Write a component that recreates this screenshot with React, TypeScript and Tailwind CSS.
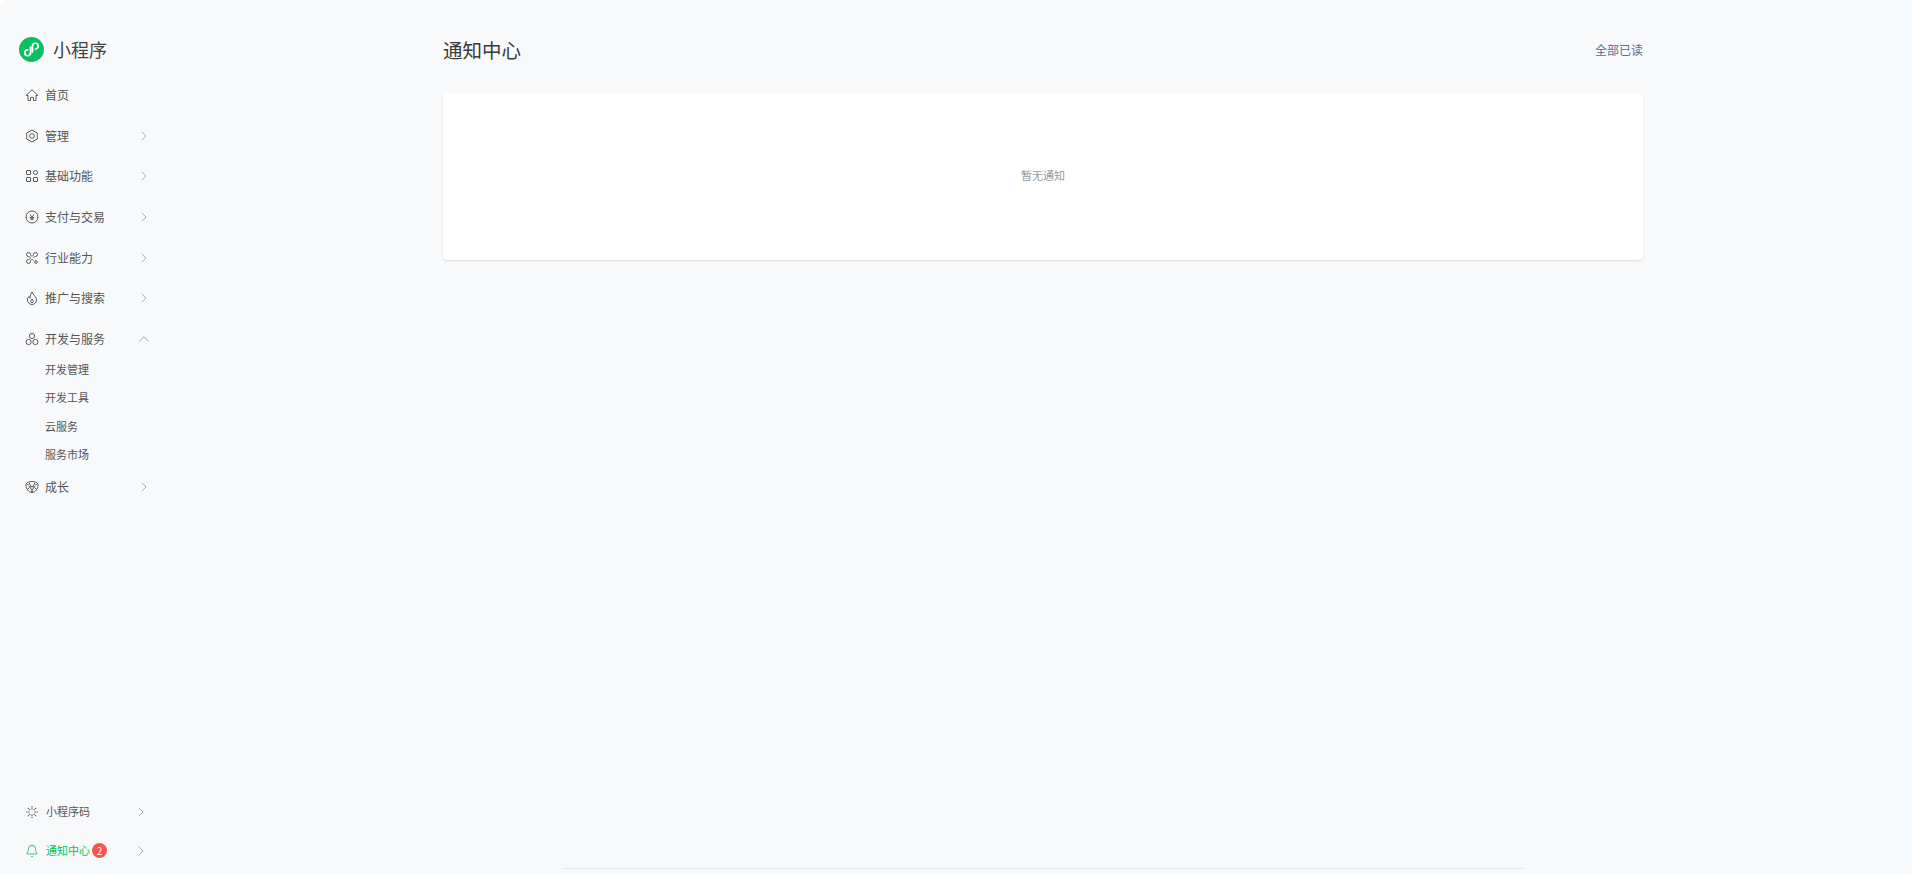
import { ChevronRight, ChevronUp, Bell } from "lucide-react";
import type { ReactNode } from "react";

const font = { fontFamily: '"Noto Sans CJK SC", "Liberation Sans", sans-serif' };

function Icon({ children }: { children: ReactNode }) {
  return (
    <svg viewBox="0 0 14 14" className="w-[14px] h-[14px] shrink-0" fill="none" stroke="#5a5a5a" strokeWidth="1">
      {children}
    </svg>
  );
}

const homeIcon = <path d="M1 7.500 7 1.800l6 5.700h-2v5H8.500V9.500h-3v3H3v-5Z" />;
const settingIcon = (
  <>
    <path d="M7 1 12.300 4v6L7 13 1.700 10V4Z" />
    <circle cx="7" cy="7" r="2.300" />
  </>
);
const appsIcon = (
  <>
    <rect x="1.500" y="1.500" width="4" height="4" rx=".5" />
    <rect x="8.500" y="1.500" width="4" height="4" rx="2" />
    <rect x="1.500" y="8.500" width="4" height="4" rx=".5" />
    <rect x="8.500" y="8.500" width="4" height="4" rx=".5" />
  </>
);
const payIcon = (
  <>
    <circle cx="7" cy="7" r="6" />
    <path d="M5 4.500 7 7l2-2.500M4.800 7.500h4.400M4.800 9h4.400M7 7v3.200" />
  </>
);
const industryIcon = (
  <>
    <path d="M3.500 1.500a2 2 0 0 1 2 2c0 1 .8 1.500 1.500 1.500S8.500 4.500 8.500 3.500a2 2 0 1 1 2 2C9.500 5.500 8.500 6.200 8.500 7" />
    <path d="M3.500 1.500a2 2 0 0 0 0 4c1 0 2 .8 2 1.500 0 .8-1 1.500-2 1.500a2 2 0 1 0 2 2c0-1 .8-2 1.500-2s1.500.5 1.500 1" />
    <circle cx="11" cy="11" r="1.300" />
  </>
);
const fireIcon = <path d="M7 1c.5 2.500 4.500 4.500 4.500 8A4.500 4.500 0 0 1 2.500 9c0-1.500.7-2.700 1.500-3.500.2 1 .7 1.500 1.200 1.700C5 5 5.800 2.800 7 1ZM7 8c-.5.800-1.300 1.300-1.300 2.400a1.300 1.300 0 0 0 2.600 0C8.300 9.300 7.500 8.800 7 8Z" />;
const devIcon = (
  <>
    <circle cx="7" cy="4" r="2.600" />
    <circle cx="3.600" cy="10" r="2.600" />
    <circle cx="10.400" cy="10" r="2.600" />
  </>
);
const growIcon = (
  <>
    <path d="M7 1.500c3 0 6 1 6 3.500 0 4-3 7.500-6 7.500S1 9 1 5c0-2.500 3-3.500 6-3.500Z" />
    <path d="M1.500 4C4 5 6 7 7 12.500 8 7 10 5 12.500 4M4 2.500C5 5 6 6 7 7c1-1 2-2 3-4.500M3 9c1-1.500 2-2.500 4-2.500S10 7.500 11 9" />
  </>
);
const codeIcon = (
  <path d="M7 1v3.500M7 9.500V13M1 7h3.500M9.500 7H13M2.800 2.800 5.200 5.200M8.800 8.800l2.400 2.400M11.200 2.800 8.800 5.200M5.200 8.800l-2.400 2.400" strokeDasharray="1.500 .7" strokeWidth="1.200" />
);

function NavRow({ icon, label, arrow = "right" }: { icon: ReactNode; label: string; arrow?: "right" | "up" | "none" }) {
  return (
    <div className="h-[40.6px] flex items-center pl-[25px] pr-[22px] gap-[6px] text-[12px] text-[#555555]">
      <Icon>{icon}</Icon>
      <span className="flex-1">{label}</span>
      {arrow === "right" && <ChevronRight size={16} strokeWidth={1} className="text-[#888888]" />}
      {arrow === "up" && <ChevronUp size={18} strokeWidth={1} className="text-[#888888] -mr-px" />}
    </div>
  );
}

function SubRow({ label }: { label: string }) {
  return <div className="h-[28.3px] flex items-center pl-[45px] text-[11px] text-[#555555]">{label}</div>;
}

export default function App() {
  return (
    <div className="h-screen flex bg-white overflow-hidden" style={font}>
      <div className="flex-1 flex bg-[#f8f9fb] rounded-tl-lg min-w-0">
        {/* Sidebar */}
        <aside className="w-[174px] shrink-0 flex flex-col pt-[37px] pb-[4px]">
          <div className="flex items-center gap-[9px] pl-[19px] mb-[13px]">
            <svg viewBox="0 0 26 26" className="w-[25px] h-[25px]">
              <circle cx="13" cy="13" r="13" fill="#07c160" />
              <path
                d="M12 10.500v6a3 3 0 1 1-3-3M14 15.500v-6a3 3 0 1 1 3 3"
                fill="none"
                stroke="#fff"
                strokeWidth="1.800"
                strokeLinecap="round"
              />
            </svg>
            <span className="text-[18px] text-[#444444] leading-[25px]">小程序</span>
          </div>
          <NavRow icon={homeIcon} label="首页" arrow="none" />
          <NavRow icon={settingIcon} label="管理" />
          <NavRow icon={appsIcon} label="基础功能" />
          <NavRow icon={payIcon} label="支付与交易" />
          <NavRow icon={industryIcon} label="行业能力" />
          <NavRow icon={fireIcon} label="推广与搜索" />
          <NavRow icon={devIcon} label="开发与服务" arrow="up" />
          <div className="-mt-[4px] -mb-[2px]">
            <SubRow label="开发管理" />
            <SubRow label="开发工具" />
            <SubRow label="云服务" />
            <SubRow label="服务市场" />
          </div>
          <NavRow icon={growIcon} label="成长" />

          <div className="mt-auto">
            <div className="h-[39px] flex items-center pl-[25px] pr-[25px] gap-[7px] text-[11px] text-[#555555]">
              <Icon>{codeIcon}</Icon>
              <span className="flex-1">小程序码</span>
              <ChevronRight size={16} strokeWidth={1} className="text-[#888888]" />
            </div>
            <div className="h-[39px] flex items-center pl-[25px] pr-[25px] gap-[7px] text-[11px] text-[#07c160]">
              <Bell size={14} strokeWidth={1.400} className="shrink-0" />
              <span>通知中心</span>
              <span className="-ml-[5px] w-[15px] h-[15px] rounded-full bg-[#fa5151] text-white text-[10px] leading-none flex items-center justify-center">
                2
              </span>
              <ChevronRight size={16} strokeWidth={1} className="text-[#888888] ml-auto" />
            </div>
          </div>
        </aside>

        {/* Main */}
        <main className="flex-1 min-w-0 flex flex-col items-center">
          <div className="w-[1200px] flex-1">
            <div className="h-[93px] flex items-center justify-between pt-[7px]">
              <h1 className="text-[19.5px] font-normal text-[#3a3a3a]">通知中心</h1>
              <span className="text-[12px] text-[#576b95]">全部已读</span>
            </div>
            <div className="h-[167px] pb-[2px] bg-white rounded-[4px] shadow-[0_1px_2px_rgba(0,0,0,0.12)] flex items-center justify-center text-[11px] text-[#999999]">
              暂无通知
            </div>
          </div>
          <div className="w-[960px] h-px bg-[#e3e4e6] mb-[5px]" />
        </main>
      </div>
    </div>
  );
}
